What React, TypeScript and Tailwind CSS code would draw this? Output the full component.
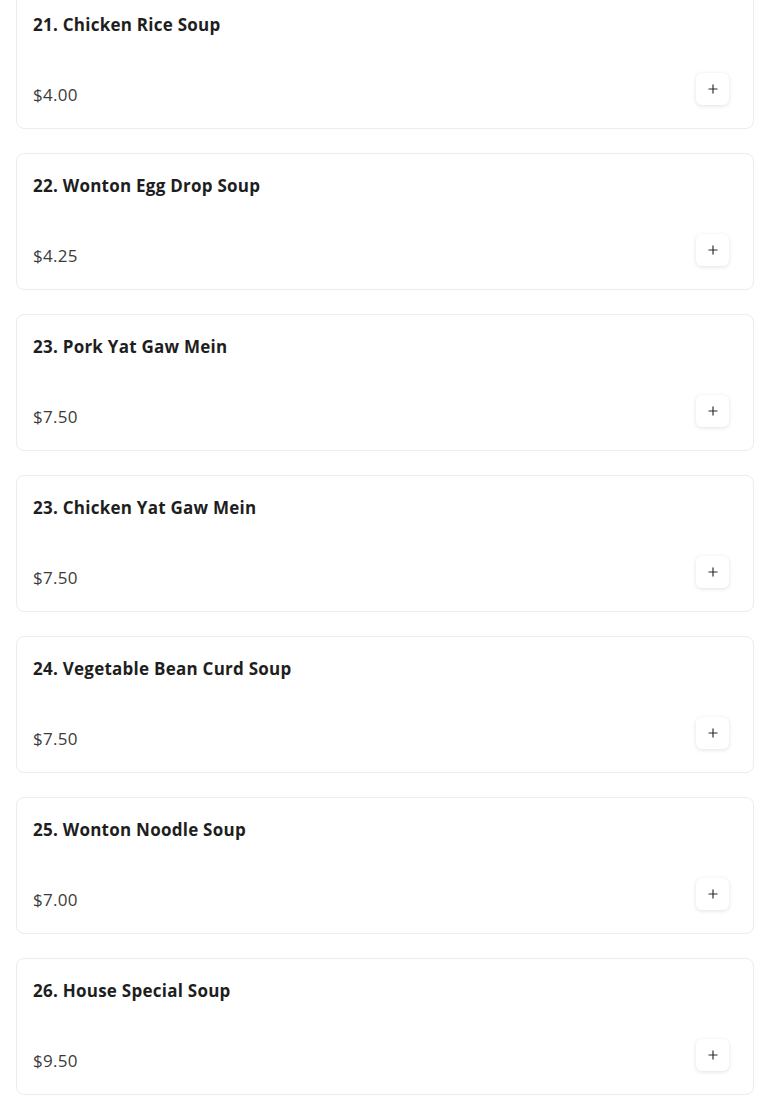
import { Plus } from "lucide-react";

interface Item {
  name: string;
  price: string;
}

const ITEMS: Item[] = [
  { name: "21. Chicken Rice Soup", price: "$4.00" },
  { name: "22. Wonton Egg Drop Soup", price: "$4.25" },
  { name: "23. Pork Yat Gaw Mein", price: "$7.50" },
  { name: "23. Chicken Yat Gaw Mein", price: "$7.50" },
  { name: "24. Vegetable Bean Curd Soup", price: "$7.50" },
  { name: "25. Wonton Noodle Soup", price: "$7.00" },
  { name: "26. House Special Soup", price: "$9.50" },
];

const MenuCard = ({ item }: { item: Item }) => (
  <div className="rounded-lg border border-[#ececec] bg-white pl-4 pr-6 pt-[17px] pb-[21px]">
    <h3 className="text-[17px] leading-[30px] font-bold tracking-[0.25px] text-[#1e1e1e]">
      {item.name}
    </h3>
    <div className="mt-[33px] flex items-start justify-between">
      <span className="mt-[10px] text-[17px] leading-6 tracking-[0.3px] text-[#3b3b3b]">
        {item.price}
      </span>
      <button className="flex h-8 w-[33px] items-center justify-center rounded-md bg-white shadow-[0_1px_4px_rgba(0,0,0,0.12)]">
        <Plus size={14} strokeWidth={2} className="text-[#2a2a2a]" />
      </button>
    </div>
  </div>
);

export default function App() {
  return (
    <div
      className="min-h-screen overflow-hidden bg-white"
      style={{ fontFamily: '"Open Sans", sans-serif' }}
    >
      <div className="-mt-2 flex flex-col gap-6 px-4">
        {ITEMS.map((item, i) => (
          <MenuCard key={i} item={item} />
        ))}
      </div>
    </div>
  );
}
